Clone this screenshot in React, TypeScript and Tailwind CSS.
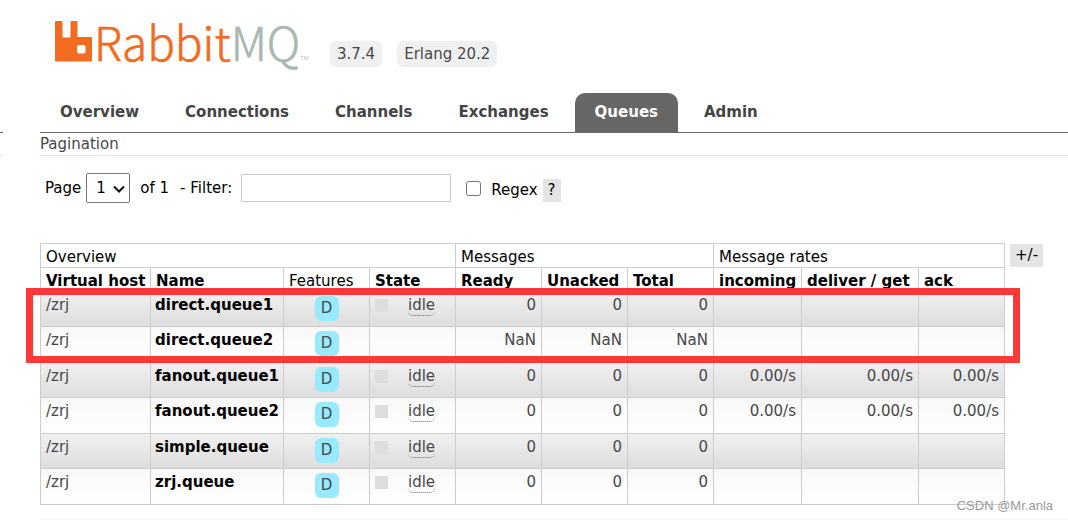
import { ReactNode } from "react";

interface QueueProp {
  name: string;
  state?: string;
  messages: string[];
  rates: string[];
}

const tabs = [
  "Overview",
  "Connections",
  "Channels",
  "Exchanges",
  "Queues",
  "Admin",
];

const zero = ["0", "0", "0"];
const noRates = ["", "", ""];
const zeroRates = ["0.00/s", "0.00/s", "0.00/s"];

const queues: QueueProp[] = [
  { name: "direct.queue1", state: "idle", messages: zero, rates: noRates },
  { name: "direct.queue2", messages: ["NaN", "NaN", "NaN"], rates: noRates },
  { name: "fanout.queue1", state: "idle", messages: zero, rates: zeroRates },
  { name: "fanout.queue2", state: "idle", messages: zero, rates: zeroRates },
  { name: "simple.queue", state: "idle", messages: zero, rates: noRates },
  { name: "zrj.queue", state: "idle", messages: zero, rates: noRates },
];

const columns = [
  { label: "Virtual host", width: "w-[110px]" },
  { label: "Name", width: "w-[133px]" },
  { label: "Features", width: "w-[86px]", plain: true },
  { label: "State", width: "w-[86px]" },
  { label: "Ready", width: "w-[86px]" },
  { label: "Unacked", width: "w-[86px]" },
  { label: "Total", width: "w-[86px]" },
  { label: "incoming", width: "w-[88px]" },
  { label: "deliver / get", width: "w-[117px]" },
  { label: "ack", width: "w-[86px]" },
];

const Logo = () => (
  <a href="#" aria-label="RabbitMQ">
    <svg
      className="block overflow-visible"
      width="260"
      height="50"
      viewBox="0 0 260 50"
    >
      <path
        fill="#f36b21"
        fillRule="evenodd"
        d="M1 6h5.500q1 0 1 1v14.500q0 1 1 1h6q1 0 1-1V7q0-1 1-1h5q1 0 1 1v15h13.500q1 0 1 1v22.500q0 1-1 1H1q-1 0-1-1V7q0-1 1-1zM24 30q-2 0-2 2v4.500q0 2 2 2h4.500q2 0 2-2V32q0-2-2-2z"
      />
      <g
        fontSize="46"
        fontWeight="300"
        strokeWidth="0.6"
        fontFamily="'Noto Sans CJK SC', 'Liberation Sans', sans-serif"
      >
        <text x="39" y="46" fill="#f36b21" stroke="#f36b21">
          Rabbit
          <tspan fill="#a9b8b0" stroke="#a9b8b0">
            MQ
          </tspan>
        </text>
      </g>
      <text
        x="245"
        y="45"
        fontSize="6"
        fill="#b8c2bc"
        fontFamily="'Liberation Sans', sans-serif"
      >
        TM
      </text>
    </svg>
  </a>
);

const Version = ({ children }: { children: ReactNode }) => (
  <span className="rounded-md bg-[#f0f0f0] px-[7px] leading-[26px] text-[#484848]">
    {children}
  </span>
);

const Help = ({ children }: { children: ReactNode }) => (
  <button type="button" className="h-[23px] bg-[#e4e4e4] px-[5px]">
    {children}
  </button>
);

const QueueRow = ({ data }: { data: QueueProp }) => (
  <tr className="h-[35px] align-top text-[#484848] odd:bg-linear-to-b odd:from-[#f0f0f0] odd:to-[#dddddd] even:h-9 even:bg-linear-to-b even:from-[#f8f8f8] even:to-white">
    <td className="border border-[#ccc] px-[5px] pt-1">/zrj</td>
    <td className="border border-[#ccc] px-1 pt-1 font-bold text-black">
      <a href="#">{data.name}</a>
    </td>
    <td className="border border-[#ccc] pt-1 text-center">
      <span className="inline-block h-[25px] w-6 rounded-md bg-[#98ebff] leading-[25px]">
        D
      </span>
    </td>
    <td className="border border-[#ccc] px-[5px] pt-1">
      {data.state && (
        <div className="flex items-start gap-5">
          <span className="mt-[3px] h-[13px] w-[13px] bg-[#ddd]" />
          <span className="rounded-[5px] border-b border-dotted border-[#666]">
            {data.state}
          </span>
        </div>
      )}
    </td>
    {[...data.messages, ...data.rates].map((v, i) => (
      <td key={i} className="border border-[#ccc] px-[5px] pt-1 text-right">
        {v}
      </td>
    ))}
  </tr>
);

const App = () => {
  return (
    <div className="relative min-h-screen overflow-hidden bg-white font-['DejaVu_Sans',Verdana,sans-serif] text-[15px] leading-[19px] text-black">
      <header className="flex items-start gap-[15px] pt-[15px] pl-[55px]">
        <Logo />
        <div className="flex gap-[15px] pt-[26px]">
          <Version>3.7.4</Version>
          <Version>Erlang 20.2</Version>
        </div>
      </header>

      <div className="mt-[26px] flex items-stretch">
        <div className="mr-[37px] w-[3px] border-b border-[#666]" />
        <nav className="flex flex-1 gap-[6px] border-b border-[#666] font-bold text-[#444]">
          {tabs.map((tab) => (
            <a
              key={tab}
              href="#"
              className={
                tab === "Queues"
                  ? "rounded-t-[10px] bg-[#666] px-5 py-[10px] text-white"
                  : "px-5 py-[10px]"
              }
            >
              {tab}
            </a>
          ))}
        </nav>
      </div>

      <div className="flex">
        <div className="mr-[37px] w-[3px] border-b border-[#e4e4e4]" />
        <h2 className="flex-1 border-b border-[#e4e4e4] pt-[2px] pb-px text-[#484848]">
          Pagination
        </h2>
      </div>

      <main className="pl-10">
        <form className="mt-[17px] flex items-center pl-[5px]">
          <label htmlFor="page">Page</label>
          <div className="relative mr-[10px] ml-[5px]">
            <select
              id="page"
              className="h-[30px] w-11 appearance-none rounded-[2px] border border-[#767676] bg-white pl-[9px]"
            >
              <option>1</option>
            </select>
            <svg
              className="pointer-events-none absolute top-3 right-[5px]"
              width="12"
              height="8"
              viewBox="0 0 12 8"
              fill="none"
              stroke="#111"
              strokeWidth="2"
            >
              <path d="M1 1.500l5 5 5-5" />
            </svg>
          </div>
          <span>of 1</span>
          <label htmlFor="filter" className="ml-[11px]">
            - Filter:
          </label>
          <input
            id="filter"
            type="text"
            className="ml-[9px] h-7 w-[210px] border border-[#ccc] px-1"
          />
          <input
            id="regex"
            type="checkbox"
            className="mr-[10px] ml-[15px] h-[15px] w-[15px]"
          />
          <label htmlFor="regex" className="mr-[5px] pt-1">
            Regex
          </label>
          <div className="flex pt-1">
            <Help>?</Help>
          </div>
        </form>

        <div className="mt-10 flex items-start gap-[5px]">
          <div className="relative">
            <table className="w-[965px] table-fixed border-collapse text-left">
              <colgroup>
                {columns.map((c) => (
                  <col key={c.label} className={c.width} />
                ))}
              </colgroup>
              <thead>
                <tr className="h-6">
                  <th colSpan={4} className="border border-[#ccc] px-[5px] pt-[3px] font-normal">
                    Overview
                  </th>
                  <th colSpan={3} className="border border-[#ccc] px-[5px] pt-[3px] font-normal">
                    Messages
                  </th>
                  <th colSpan={3} className="border border-[#ccc] px-[5px] pt-[3px] font-normal">
                    Message rates
                  </th>
                </tr>
                <tr className="h-6">
                  {columns.map((c) => (
                    <th
                      key={c.label}
                      className={
                        c.plain
                          ? "border border-[#ccc] px-[5px] pt-[3px] font-normal whitespace-nowrap"
                          : "border border-[#ccc] px-[5px] pt-[3px] font-bold whitespace-nowrap"
                      }
                    >
                      {c.label}
                    </th>
                  ))}
                </tr>
              </thead>
              <tbody>
                {queues.map((q) => (
                  <QueueRow key={q.name} data={q} />
                ))}
              </tbody>
            </table>
            {/* marks the two direct queues */}
            <div className="pointer-events-none absolute top-[45px] -right-[15px] -left-[14px] h-[75px] border-[7px] border-[#fc3838]" />
          </div>
          <div className="flex pt-px">
            <Help>+/-</Help>
          </div>
        </div>
        <div className="mt-[14px] border-t border-[#f5f5f5]" />
      </main>

      <span className="absolute right-[15px] bottom-[5px] font-['Liberation_Sans',sans-serif] text-[13px] text-[#999]">
        CSDN @Mr.anla
      </span>
    </div>
  );
};

export default App;
